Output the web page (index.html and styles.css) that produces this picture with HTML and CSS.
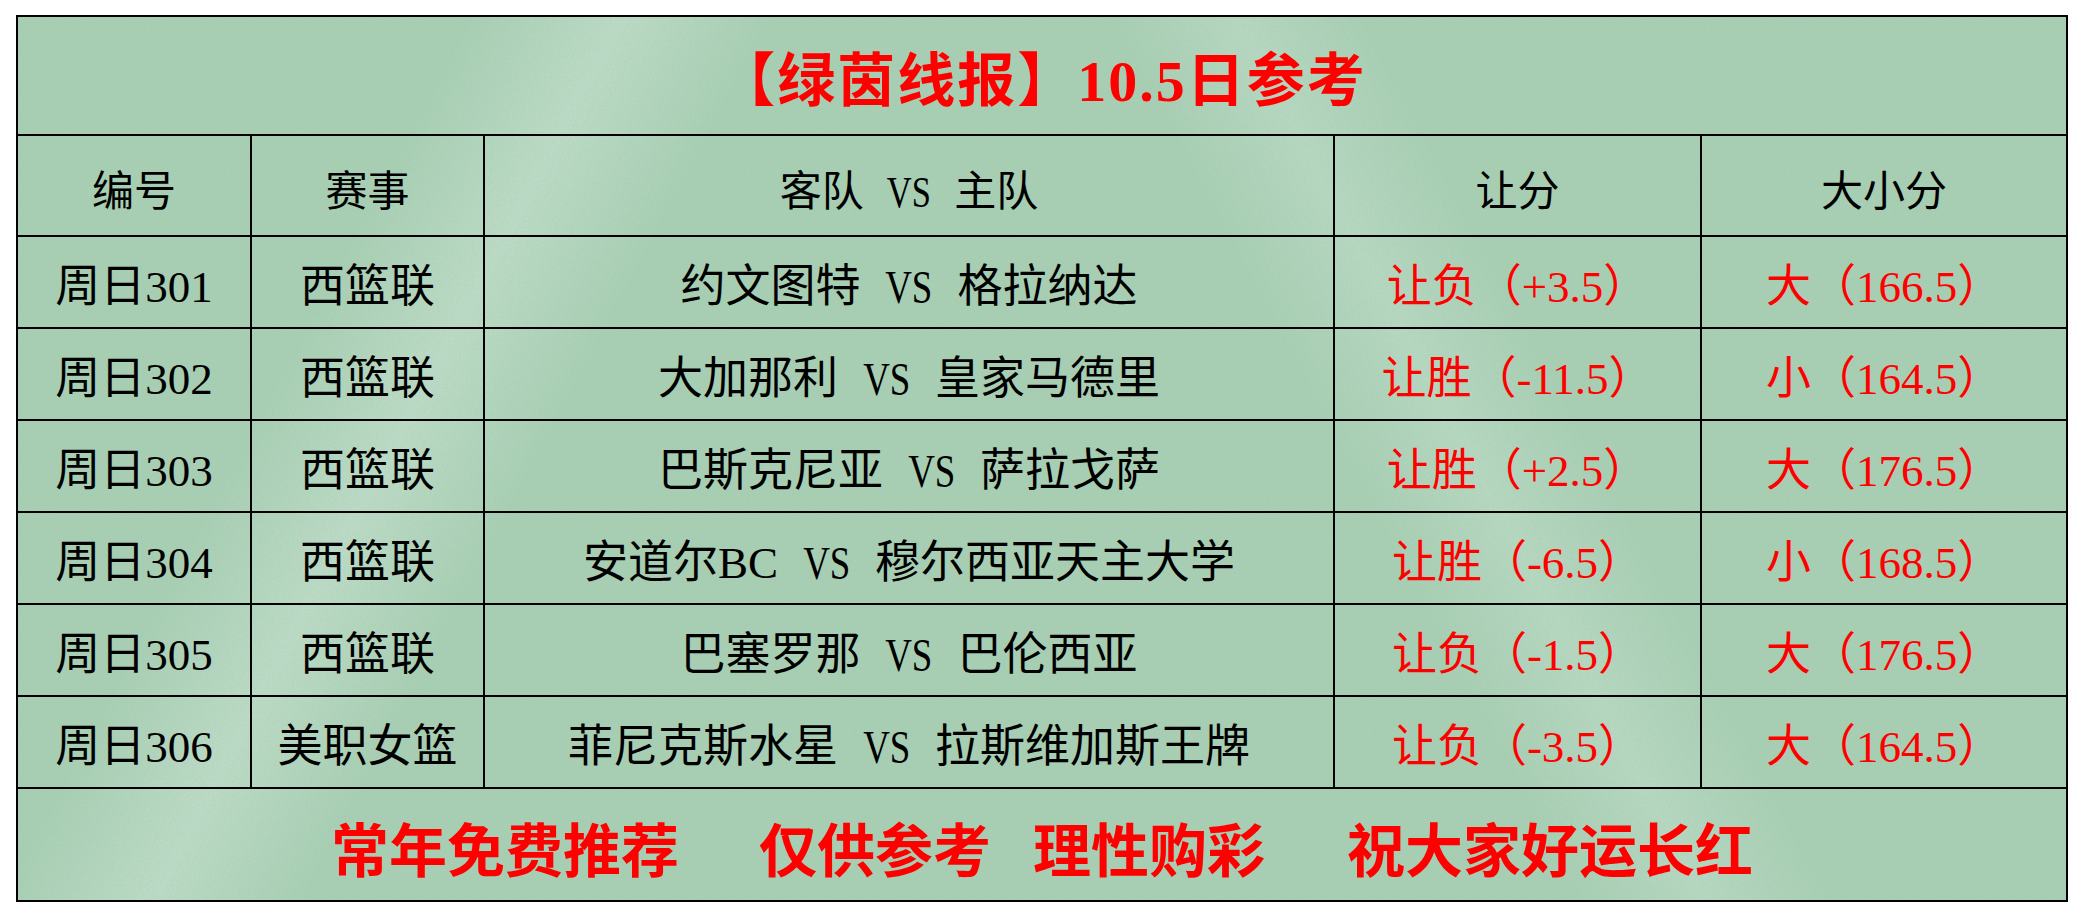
FILE: index.html
```html
<!DOCTYPE html>
<html lang="zh-CN">
<head>
<meta charset="utf-8">
<title>绿茵线报 10.5日参考</title>
<link rel="stylesheet" href="styles.css">
</head>
<body>
<div class="page">
  <table class="board">
    <colgroup>
      <col class="c-no"><col class="c-league"><col class="c-match"><col class="c-hcp"><col class="c-ou">
    </colgroup>
    <tr class="title-row"><td colspan="5" class="title">【绿茵线报】10.5日参考</td></tr>
    <tr class="head-row">
      <td>编号</td><td>赛事</td><td class="pre">客队 <span class="vs">VS</span> 主队</td><td>让分</td><td>大小分</td>
    </tr>
    <tr class="data-row"><td>周日301</td><td>西篮联</td><td class="pre">约文图特 <span class="vs">VS</span> 格拉纳达</td><td class="red">让负（+3.5）</td><td class="red">大（166.5）</td></tr>
    <tr class="data-row"><td>周日302</td><td>西篮联</td><td class="pre">大加那利 <span class="vs">VS</span> 皇家马德里</td><td class="red">让胜（-11.5）</td><td class="red">小（164.5）</td></tr>
    <tr class="data-row"><td>周日303</td><td>西篮联</td><td class="pre">巴斯克尼亚 <span class="vs">VS</span> 萨拉戈萨</td><td class="red">让胜（+2.5）</td><td class="red">大（176.5）</td></tr>
    <tr class="data-row"><td>周日304</td><td>西篮联</td><td class="pre">安道尔BC <span class="vs">VS</span> 穆尔西亚天主大学</td><td class="red">让胜（-6.5）</td><td class="red">小（168.5）</td></tr>
    <tr class="data-row"><td>周日305</td><td>西篮联</td><td class="pre">巴塞罗那 <span class="vs">VS</span> 巴伦西亚</td><td class="red">让负（-1.5）</td><td class="red">大（176.5）</td></tr>
    <tr class="data-row"><td>周日306</td><td>美职女篮</td><td class="pre">菲尼克斯水星 <span class="vs">VS</span> 拉斯维加斯王牌</td><td class="red">让负（-3.5）</td><td class="red">大（164.5）</td></tr>
    <tr class="foot-row">
      <td colspan="5">
        <div class="slogans">
          <span>常年免费推荐</span><span class="s2">仅供参考</span><span class="s3">理性购彩</span><span class="s4">祝大家好运长红</span>
        </div>
      </td>
    </tr>
  </table>
</div>
</body>
</html>
```

FILE: styles.css
```css
html, body {
  margin: 0;
  padding: 0;
  background: #ffffff;
}

.page {
  padding: 15px 16px 0 16px;
}

.board {
  width: 2050px;
  border-collapse: collapse;
  table-layout: fixed;
  border: 2px solid #000;
  background-color: #a8d0b4;
  background-image:
    url("data:image/svg+xml,%3Csvg xmlns='http://www.w3.org/2000/svg' width='260' height='260'%3E%3Cfilter id='n'%3E%3CfeTurbulence type='fractalNoise' baseFrequency='0.45' numOctaves='3' seed='4'/%3E%3CfeColorMatrix values='0 0 0 0 0.35  0 0 0 0 0.5  0 0 0 0 0.4  0 0 0 0.28 -0.02'/%3E%3C/filter%3E%3Crect width='100%25' height='100%25' filter='url(%23n)'/%3E%3C/svg%3E"),
    linear-gradient(118deg, rgba(255,255,255,0) 18%, rgba(230,245,235,0.35) 24%, rgba(255,255,255,0) 30%),
    linear-gradient(62deg, rgba(255,255,255,0) 62%, rgba(230,245,235,0.25) 67%, rgba(255,255,255,0) 72%);
  font-family: "Liberation Serif", "Noto Sans CJK SC", serif;
  color: #000;
}

.c-no { width: 234px; }
.c-league { width: 233px; }
.c-match { width: 850px; }
.c-hcp { width: 367px; }
.c-ou { width: 366px; }

.board td {
  border: 2px solid #000;
  text-align: center;
  vertical-align: middle;
  padding: 0;
  white-space: nowrap;
}

.pre {
  white-space: pre;
  word-spacing: 0.3em;
}

.vs {
  display: inline-block;
  transform: scale(0.82, 1.05);
  margin: 0 -0.11em;
}

.title-row { height: 119px; }
.head-row { height: 101px; }
.data-row { height: 92px; }
.foot-row { height: 113px; }

.title {
  color: #ff0000;
  font-weight: 700;
  font-size: 58px;
  letter-spacing: 2px;
}

.head-row td {
  font-size: 42px;
  padding-top: 4px;
}

.data-row td {
  font-size: 45px;
}

.red { color: #ff0000; }

.slogans {
  display: flex;
  justify-content: center;
  align-items: center;
  color: #ff0000;
  font-weight: 700;
  font-size: 58px;
  padding-top: 4px;
}

.slogans .s2 { margin-left: 80px; }
.slogans .s3 { margin-left: 42px; }
.slogans .s4 { margin-left: 82px; }
```
